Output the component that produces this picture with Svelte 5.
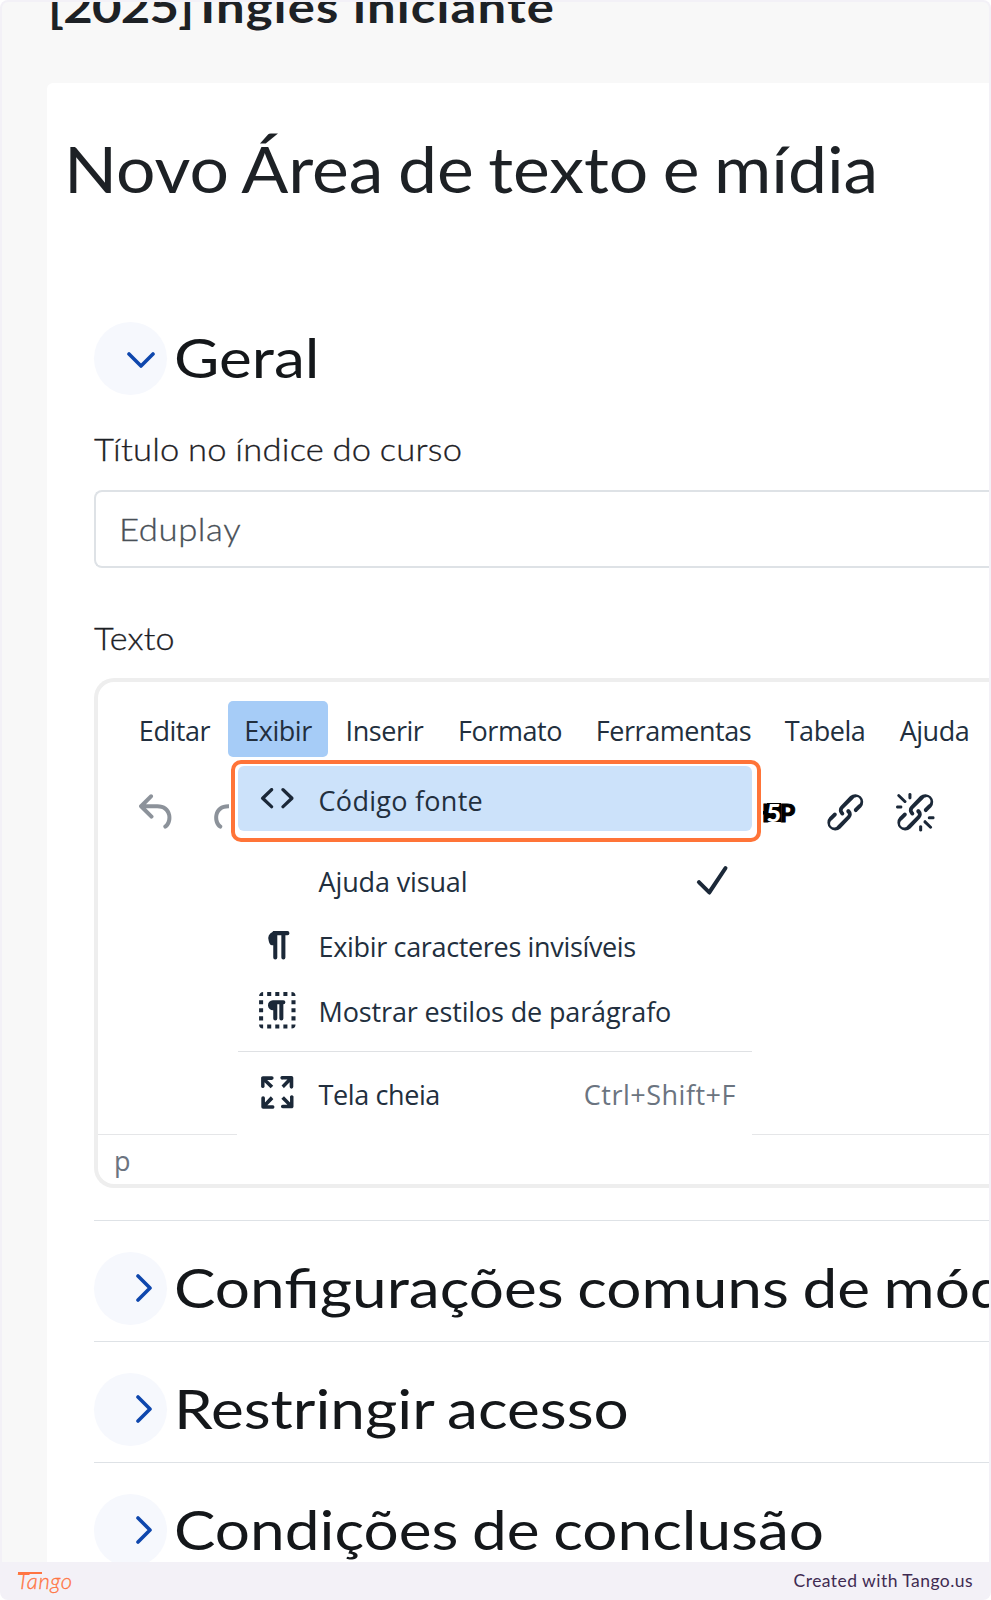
<script>
    const menus = ['Editar', 'Exibir', 'Inserir', 'Formato', 'Ferramentas', 'Tabela', 'Ajuda'];
    let openMenu = 'Exibir';

    const sections = ['Configurações comuns de módulos', 'Restringir acesso', 'Condições de conclusão'];

    const icons = {
        undo: 'M6.4 8H12c3.7 0 6.2 2 6.8 5.1.6 2.7-.4 5.6-2.3 6.8a1 1 0 01-1-1.8c1.1-.6 1.8-2.7 1.4-4.6-.5-2.1-2.1-3.5-4.9-3.5H6.4l3.3 3.3a1 1 0 11-1.4 1.4l-5-5a1 1 0 010-1.4l5-5a1 1 0 011.4 1.4L6.4 8Z',
        link: 'M6.2 12.3a1 1 0 011.4 1.4l-2 2a2 2 0 102.6 2.8l4.8-4.8a1 1 0 000-1.4 1 1 0 111.4-1.3 2.9 2.9 0 010 4L9.6 20a3.9 3.9 0 01-5.5-5.5l2-2Zm11.6-.6a1 1 0 01-1.4-1.4l2-2a2 2 0 10-2.6-2.8L11 10.3a1 1 0 000 1.4A1 1 0 119.6 13a2.9 2.9 0 010-4L14.4 4a3.9 3.9 0 015.5 5.5l-2 2Z',
        unlink: 'M7.6 6.3a.8.8 0 01-1 1.1L3.3 4.2a.7.7 0 111-1l3.2 3.1ZM5.1 8.6a.8.8 0 010 1.5H3a.8.8 0 010-1.5H5Zm5-3.5a.8.8 0 01-1.5 0V3a.8.8 0 011.5 0V5Zm6 11.8a.8.8 0 011-1l3.2 3.2a.8.8 0 01-1 1L16 17Zm-2.2 2a.8.8 0 011.5 0V21a.8.8 0 01-1.5 0V19Zm5-3.5a.7.7 0 110-1.5H21a.8.8 0 010 1.5H19Z',
        code: 'M9.8 15.7c.3.3.3.8 0 1-.3.4-.9.4-1.2 0l-4.4-4.1a.8.8 0 010-1.2l4.4-4.2c.3-.3.9-.3 1.2 0 .3.3.3.8 0 1.1L6 12l3.8 3.7ZM14.2 15.7c-.3.3-.3.8 0 1 .4.4.9.4 1.2 0l4.4-4.1c.3-.3.3-.9 0-1.2l-4.4-4.2a.8.8 0 00-1.2 0c-.3.3-.3.8 0 1.1L18 12l-3.8 3.7Z',
        check: 'M18.2 5.4a1 1 0 011.6 1.2l-8 12a1 1 0 01-1.5.1l-5-5a1 1 0 111.4-1.4l4.1 4.1 7.4-11Z',
        chars: 'M10 5h7a1 1 0 010 2h-1v11a1 1 0 01-2 0V7h-2v11a1 1 0 01-2 0v-6c-.5 0-1 0-1.4-.3A3.4 3.4 0 017.8 10a3.3 3.3 0 010-2.8 3.4 3.4 0 011.8-1.8L10 5Z',
        blocks: 'M9 19v2H7v-2h2Zm-4 0v2a2 2 0 01-2-2h2Zm8 0v2h-2v-2h2Zm8 0a2 2 0 01-2 2v-2h2Zm-4 0v2h-2v-2h2ZM15 7a1 1 0 010 2v7a1 1 0 01-2 0V9h-1v7a1 1 0 01-2 0v-4a2.5 2.5 0 01-.2-5H15ZM5 15v2H3v-2h2Zm16 0v2h-2v-2h2ZM5 11v2H3v-2h2Zm16 0v2h-2v-2h2ZM5 7v2H3V7h2Zm16 0v2h-2V7h2ZM5 3v2H3c0-1.1.9-2 2-2Zm8 0v2h-2V3h2Zm6 0a2 2 0 012 2h-2V3ZM9 3v2H7V3h2Zm8 0v2h-2V3h2Z',
        fullscreen: 'm15.3 10-1.2-1.3 2.9-3h-2.3a.9.9 0 110-1.7H19c.5 0 .9.4.9.9v4.4a.9.9 0 11-1.8 0V7l-2.9 3Zm0 4 3 3v-2.3a.9.9 0 111.7 0V19c0 .5-.4.9-.9.9h-4.4a.9.9 0 110-1.8H17l-3-2.9 1.3-1.2ZM10 15.4l-2.9 3h2.3a.9.9 0 110 1.7H5a.9.9 0 01-.9-.9v-4.4a.9.9 0 111.8 0V17l2.9-3 1.2 1.3ZM8.7 10 5.7 7v2.3a.9.9 0 01-1.7 0V5c0-.5.4-.9.9-.9h4.4a.9.9 0 010 1.8H7l3 2.9-1.3 1.2Z'
    };
</script>

<div class="frame">
    <main>
        <div class="course"><span class="year">[2025]</span> Inglês iniciante</div>
        <div class="panel">
            <h1>Novo Área de texto e mídia</h1>

            <div class="head general">
                <span class="toggle">
                    <svg width="28" height="17" viewBox="0 0 28 17"><path d="M2 2l12 12L26 2" /></svg>
                </span>
                <h3>Geral</h3>
            </div>

            <label for="title">Título no índice do curso</label>
            <div class="input" id="title"><span>Eduplay</span></div>
            <label for="editor" class="text-label">Texto</label>

            <div class="editor" id="editor">
                <div class="menubar">
                    {#each menus as menu}
                        <span class="mb" class:open={menu === openMenu}>{menu}</span>
                    {/each}
                </div>
                <div class="toolbar">
                    <svg class="icon off" viewBox="0 0 24 24"><path d={icons.undo} /></svg>
                    <svg class="icon off redo" viewBox="0 0 24 24"><path d={icons.undo} /></svg>
                    <span class="h5p"><b>H</b><i>5</i><b>P</b></span>
                    <svg class="icon" viewBox="0 0 24 24"><path d={icons.link} /></svg>
                    <svg class="icon unlink" viewBox="0 0 24 24"><path d={icons.link + icons.unlink} /></svg>
                </div>
                <div class="statusbar">p</div>

                <div class="dropdown">
                    <div class="ring">
                        <div class="item active">
                            <svg class="icon" viewBox="0 0 24 24"><path d={icons.code} /></svg>
                            <span class="source">Código fonte</span>
                        </div>
                    </div>
                    <div class="item">
                        <span class="icon"></span>
                        <span>Ajuda visual</span>
                        <svg class="icon check" viewBox="0 0 24 24"><path d={icons.check} /></svg>
                    </div>
                    <div class="item">
                        <svg class="icon" viewBox="0 0 24 24"><path d={icons.chars} /></svg>
                        <span class="invisible">Exibir caracteres invisíveis</span>
                    </div>
                    <div class="item">
                        <svg class="icon" viewBox="0 0 24 24"><path d={icons.blocks} /></svg>
                        <span>Mostrar estilos de parágrafo</span>
                    </div>
                    <div class="item last">
                        <svg class="icon" viewBox="0 0 24 24"><path d={icons.fullscreen} /></svg>
                        <span class="full">Tela cheia</span>
                        <span class="key">Ctrl+Shift+F</span>
                    </div>
                </div>
            </div>

            <div class="sections">
                {#each sections as title}
                    <div class="head closed">
                        <span class="toggle">
                            <svg width="17" height="28" viewBox="0 0 17 28"><path d="M2 2l12 12L2 26" /></svg>
                        </span>
                        <h3>{title}</h3>
                    </div>
                {/each}
            </div>
        </div>
    </main>
    <footer>
        <span class="logo">Tango</span>
        <span class="credit">Created with Tango.us</span>
    </footer>
</div>

<style>
    :global(body) {
        background: #fff;
    }
    .frame, .frame * {
        box-sizing: border-box;
    }
    .frame {
        width: 991px;
        height: 1600px;
        display: flex;
        flex-direction: column;
        background: #f3f1f7;
        border-radius: 8px;
        overflow: hidden;
        font-family: Lato, sans-serif;
        color: #1d2125;
        white-space: nowrap;
    }
    main {
        height: 1560px;
        margin: 2px 2px 0;
        border-radius: 6px 6px 0 0;
        background: #f8f8f8;
        overflow: hidden;
    }
    .course, h1, h3, label, .input span {
        transform-origin: 0 50%;
    }
    .course {
        margin: -16px 0 57px 46px;
        height: 40px;
        line-height: 40px;
        font-size: 44px;
        font-weight: 700;
        letter-spacing: 1px;
        transform: scaleX(1.155);
    }
    .year {
        margin-right: -6px;
        letter-spacing: -.6px;
    }
    .panel {
        margin-left: 45px;
        padding: 46px 0 0 47px;
        height: 1600px;
        background: #fff;
        border-radius: 6px 0 0 0;
    }
    h1, h3 {
        margin: 0;
        font-weight: 400;
    }
    h1 {
        margin-left: -30px;
        height: 76px;
        line-height: 80px;
        font-size: 63px;
        word-spacing: -3px;
        transform: scaleX(1.105);
    }
    .head {
        display: flex;
        align-items: center;
        height: 73px;
    }
    .general {
        margin-top: 117px;
    }
    .toggle {
        width: 73px;
        height: 73px;
        flex: none;
        border-radius: 50%;
        background: #f6f8fd;
        display: flex;
        align-items: center;
        justify-content: flex-end;
        padding: 3px 12px 0 0;
    }
    .toggle path {
        fill: none;
        stroke: #0f47ad;
        stroke-width: 3.6;
        stroke-linecap: round;
        stroke-linejoin: round;
    }
    h3 {
        margin-left: 7px;
        padding-bottom: 2px;
        line-height: 64px;
        font-size: 54px;
        color: #14171a;
        word-spacing: -2px;
        transform: scaleX(1.15);
    }
    label {
        display: block;
        margin-top: 33px;
        height: 40px;
        line-height: 42px;
        font-size: 31px;
        font-weight: 300;
        -webkit-text-stroke: .3px;
        letter-spacing: .2px;
        word-spacing: -1px;
        transform: scaleX(1.115);
    }
    .input {
        margin-top: 22px;
        height: 78px;
        border: 2px solid #dee2e6;
        border-right: 0;
        border-radius: 8px 0 0 8px;
        padding-left: 23px;
        line-height: 75px;
        font-size: 31px;
        font-weight: 300;
        -webkit-text-stroke: .3px;
        color: #495057;
        letter-spacing: .5px;
    }
    .input span {
        display: inline-block;
        transform: scaleX(1.12);
    }
    .text-label {
        margin-top: 49px;
        transform: scaleX(1.1);
    }
    .editor {
        position: relative;
        margin-top: 21px;
        height: 510px;
        border: 4px solid #eee;
        border-right: 0;
        border-radius: 20px 0 0 20px;
        padding-top: 19px;
        display: flex;
        flex-direction: column;
        font-family: "Open Sans", "Noto Sans", sans-serif;
        font-size: 27px;
        color: #222f3e;
    }
    .menubar {
        display: grid;
        grid-template-columns: 107px 100px 113px 138px 189px 114px 105px;
        margin-left: 23px;
        letter-spacing: -.45px;
    }
    .mb {
        height: 56px;
        line-height: 60px;
        text-align: center;
        border-radius: 5px;
    }
    .open {
        background: #a6ccf7;
    }
    .toolbar {
        display: flex;
        align-items: center;
        height: 48px;
        margin: 31px 0 0 35px;
    }
    .icon {
        width: 48.6px;
        height: 48.6px;
        flex: none;
        fill: #1b2838;
    }
    .off {
        opacity: .5;
    }
    .redo {
        transform: scaleX(-1);
        margin-left: 22px;
    }
    .h5p {
        display: flex;
        align-items: center;
        margin-left: 498px;
        width: 71px;
        font: 900 25px/20px Lato, sans-serif;
        color: #000;
    }
    .h5p b {
        -webkit-text-stroke: 1px #000;
    }
    .h5p i {
        width: 14px;
        margin-left: -3px;
        text-align: center;
        font-style: normal;
        line-height: 19px;
        color: #fff;
        background: #000;
    }
    .h5p b:last-child {
        margin-left: -1px;
    }
    .unlink {
        margin-left: 21px;
    }
    .statusbar {
        margin-top: auto;
        height: 50px;
        border-top: 1.5px solid #e5e6e8;
        padding-left: 16px;
        line-height: 52px;
        color: #6b7480;
    }
    .dropdown {
        position: absolute;
        z-index: 1;
        left: 131px;
        top: 76px;
        width: 536px;
        height: 384px;
        padding: 2px;
    }
    .dropdown::before {
        content: "";
        position: absolute;
        z-index: -1;
        left: 8px;
        right: 13px;
        top: 0;
        bottom: 0;
        background: #fff;
    }
    .ring {
        width: 530px;
        height: 82px;
        border: 4.5px solid #ff7438;
        border-radius: 10px;
        padding: 1.5px 4px;
        background: #fff;
        box-shadow: 0 0 0 2px #fff;
        margin-bottom: 6px;
    }
    .item {
        display: flex;
        align-items: center;
        width: 514px;
        height: 65px;
        margin-left: 7px;
        padding: 0 16px 0 15px;
        letter-spacing: -.15px;
    }
    .item > span:nth-child(2) {
        margin-left: 17px;
        padding-top: 2px;
    }
    .item > .source:nth-child(2) {
        padding-top: 5px;
        letter-spacing: .27px;
    }
    .item > .invisible {
        letter-spacing: -.34px;
    }
    .item > .full:nth-child(2) {
        padding-top: 3px;
        letter-spacing: -.4px;
    }
    .active {
        margin-left: -1px;
        background: #cce2fa;
        border-radius: 6px;
    }
    .check {
        margin-left: auto;
    }
    .last {
        margin-top: 8px;
        border-top: 1.5px solid #dfe1e4;
        height: 82px;
    }
    .key {
        margin-left: auto;
        padding-top: 3px;
        color: #6b7480;
        letter-spacing: .5px;
    }
    .sections {
        margin-top: 32px;
    }
    .closed {
        height: 121px;
        border-top: 1.5px solid #dee2e6;
        padding-top: 14px;
    }
    .closed .toggle {
        padding: 0 14px 0 0;
    }
    .closed h3 {
        padding-bottom: 0;
    }
    footer {
        flex: 1;
        display: flex;
        justify-content: space-between;
        padding: 0 18px 0 17px;
        line-height: 38px;
        color: #3f2b52;
    }
    .logo {
        position: relative;
        font-size: 22px;
        font-style: italic;
        font-weight: 300;
        letter-spacing: .6px;
        color: #ff7442;
        -webkit-text-stroke: .3px;
    }
    /* long crossbar of the wordmark */
    .logo::before {
        content: "";
        position: absolute;
        left: 1px;
        top: 10px;
        width: 24px;
        height: 1.5px;
        background: #ff7442;
    }
    .credit {
        font-size: 17.5px;
        letter-spacing: .45px;
    }
</style>
